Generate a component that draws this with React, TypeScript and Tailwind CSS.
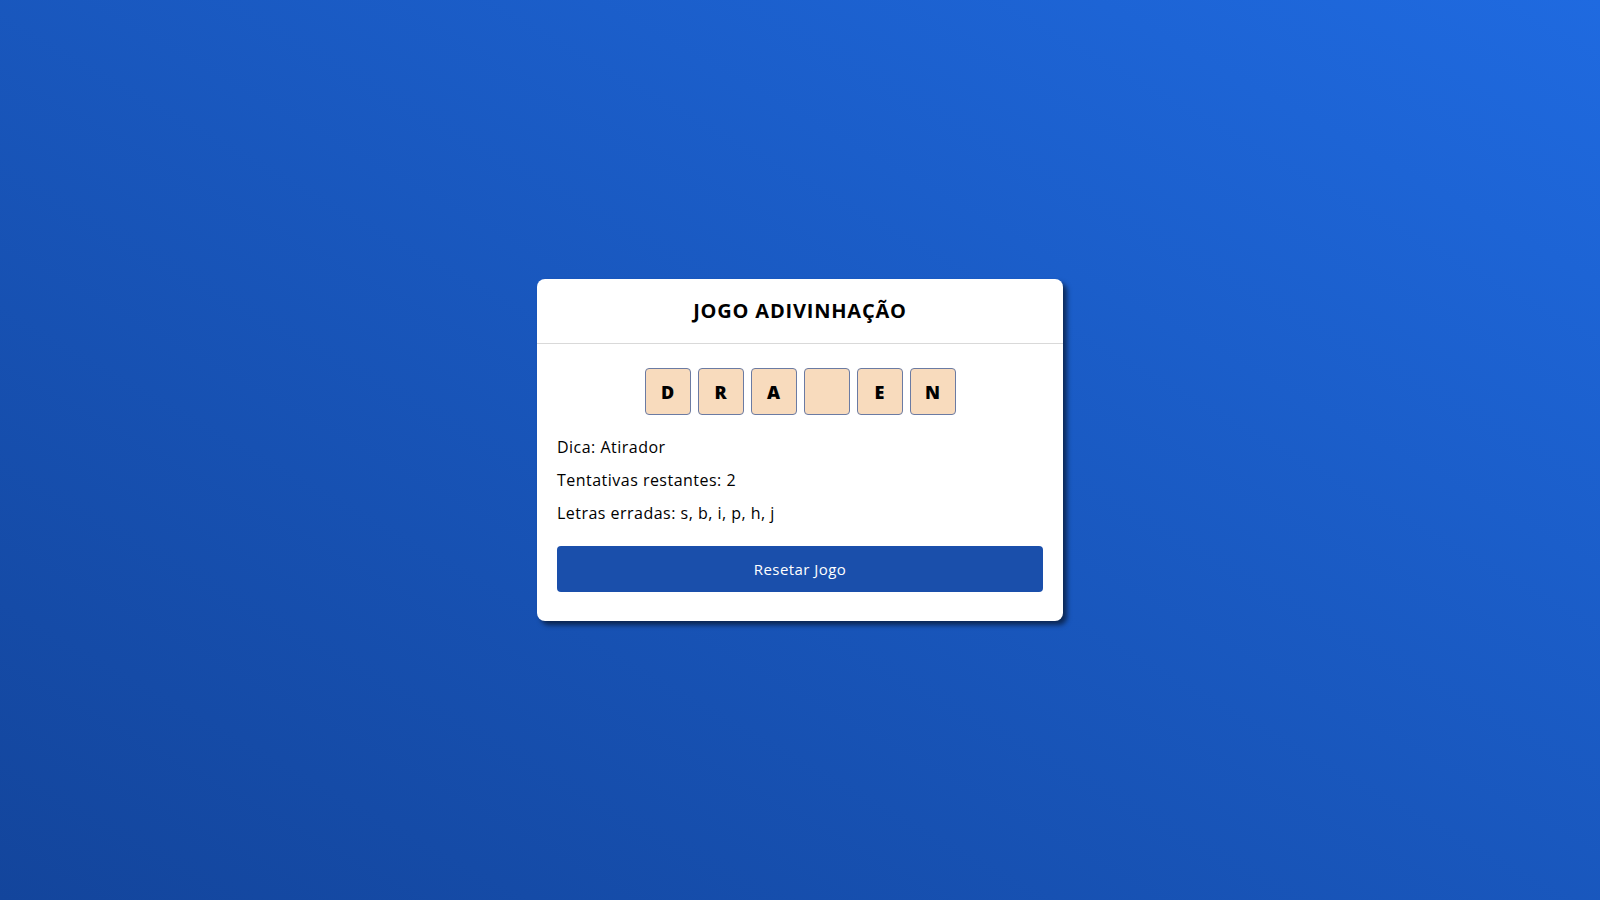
export default function App() {
    const letters = ["D", "R", "A", "", "E", "N"];
    const wrong = ["s", "b", "i", "p", "h", "j"];

    return (
        <main className="w-full h-[900px] flex items-center justify-center bg-linear-to-tr from-[#13459c] to-[#1f6ae0] font-['Open_Sans',sans-serif] text-black">
            <section className="w-[526px] bg-white rounded-lg shadow-[4px_4px_5px_rgba(0,0,0,0.55)]">
                <header className="h-[65px] border-b border-[#d9d9d9] flex items-center justify-center">
                    <h1 className="text-xl font-bold leading-6 tracking-[0.04em]">JOGO ADIVINHAÇÃO</h1>
                </header>
                <div className="px-5 pt-6 pb-[29px]">
                    <div className="flex justify-center gap-[7px]">
                        {letters.map((it, index) => (
                            <div key={index}
                                className="w-[46px] h-[47px] rounded bg-[#f8dbbd] border border-[#6b7ba3] flex items-center justify-center text-lg font-extrabold">
                                {it}
                            </div>
                        ))}
                    </div>
                    <div className="mt-5 flex flex-col gap-[9px] text-base leading-6 tracking-[0.03em]">
                        <p>Dica: Atirador</p>
                        <p>Tentativas restantes: 2</p>
                        <p>Letras erradas: {wrong.join(", ")}</p>
                    </div>
                    <button className="mt-[21px] w-full h-[46px] rounded bg-[#1a4fab] text-white text-[15px] tracking-[0.03em]">
                        Resetar Jogo
                    </button>
                </div>
            </section>
        </main>
    );
}
